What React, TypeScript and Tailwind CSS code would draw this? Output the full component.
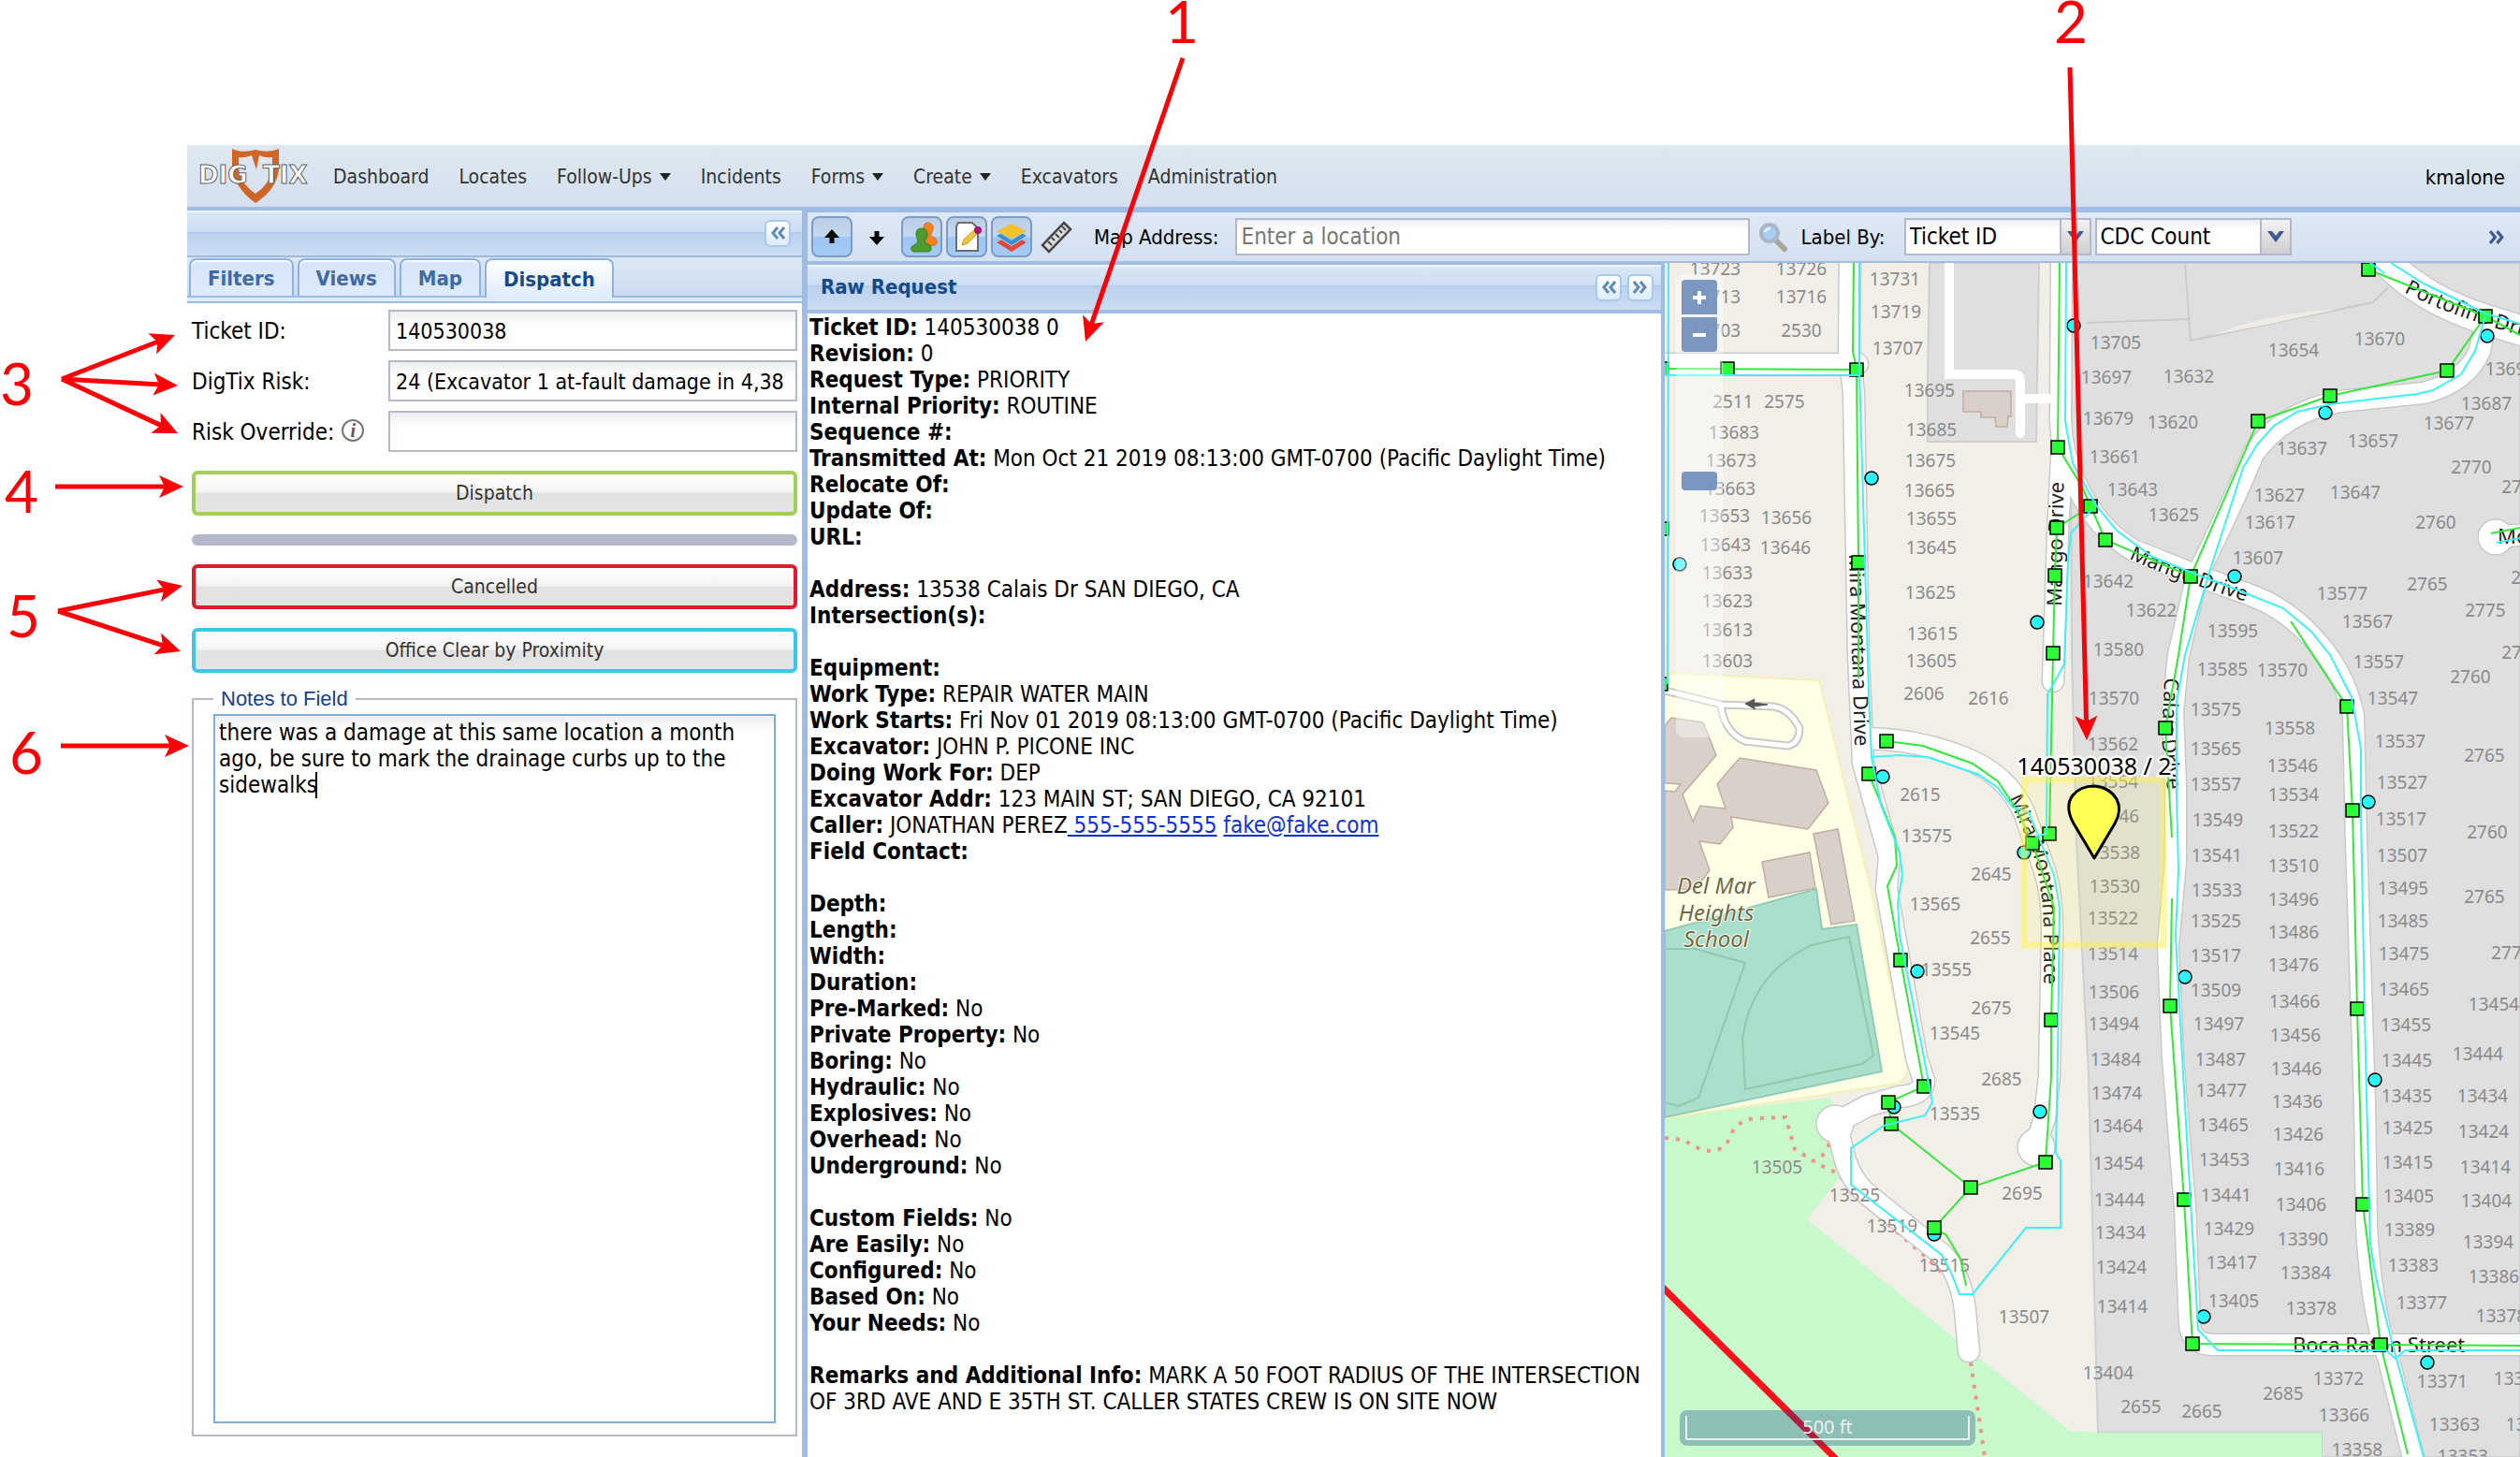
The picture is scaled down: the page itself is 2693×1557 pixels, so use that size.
import { Fragment, ReactNode } from "react";

type Point = [number, number];

const navItems = [
  { label: "Dashboard", menu: false },
  { label: "Locates", menu: false },
  { label: "Follow-Ups", menu: true },
  { label: "Incidents", menu: false },
  { label: "Forms", menu: true },
  { label: "Create", menu: true },
  { label: "Excavators", menu: false },
  { label: "Administration", menu: false },
];

const tabs = ["Filters", "Views", "Map", "Dispatch"];

// null is a blank line between the groups
const ticket: ([string, string] | null)[] = [
  ["Ticket ID:", "140530038 0"],
  ["Revision:", "0"],
  ["Request Type:", "PRIORITY"],
  ["Internal Priority:", "ROUTINE"],
  ["Sequence #:", ""],
  ["Transmitted At:", "Mon Oct 21 2019 08:13:00 GMT-0700 (Pacific Daylight Time)"],
  ["Relocate Of:", ""],
  ["Update Of:", ""],
  ["URL:", ""],
  null,
  ["Address:", "13538 Calais Dr SAN DIEGO, CA"],
  ["Intersection(s):", ""],
  null,
  ["Equipment:", ""],
  ["Work Type:", "REPAIR WATER MAIN"],
  ["Work Starts:", "Fri Nov 01 2019 08:13:00 GMT-0700 (Pacific Daylight Time)"],
  ["Excavator:", "JOHN P. PICONE INC"],
  ["Doing Work For:", "DEP"],
  ["Excavator Addr:", "123 MAIN ST; SAN DIEGO, CA 92101"],
  ["Caller:", "JONATHAN PEREZ"],
  ["Field Contact:", ""],
  null,
  ["Depth:", ""],
  ["Length:", ""],
  ["Width:", ""],
  ["Duration:", ""],
  ["Pre-Marked:", "No"],
  ["Private Property:", "No"],
  ["Boring:", "No"],
  ["Hydraulic:", "No"],
  ["Explosives:", "No"],
  ["Overhead:", "No"],
  ["Underground:", "No"],
  null,
  ["Custom Fields:", "No"],
  ["Are Easily:", "No"],
  ["Configured:", "No"],
  ["Based On:", "No"],
  ["Your Needs:", "No"],
  null,
  [
    "Remarks and Additional Info:",
    "MARK A 50 FOOT RADIUS OF THE INTERSECTION OF 3RD AVE AND E 35TH ST. CALLER STATES CREW IS ON SITE NOW",
  ],
];

const houses: [string, number, number][] = [
  ["13723", 1833, 287], ["13726", 1925, 287], ["13713", 1833, 317], ["13716", 1925, 317],
  ["13703", 1833, 353], ["2530", 1925, 353], ["13731", 2025, 298], ["13719", 2026, 333],
  ["13707", 2028, 372], ["13695", 2062, 417], ["2511", 1852, 429], ["2575", 1907, 429],
  ["13683", 1853, 462], ["13685", 2064, 459], ["13673", 1850, 492], ["13675", 2063, 492],
  ["13663", 1849, 522], ["13665", 2062, 524], ["13653", 1843, 551], ["13656", 1909, 553],
  ["13655", 2064, 554], ["13643", 1844, 582], ["13646", 1908, 585], ["13645", 2064, 585],
  ["13633", 1846, 612], ["13623", 1846, 642], ["13625", 2063, 633], ["13613", 1846, 673],
  ["13615", 2065, 677], ["13603", 1846, 706], ["13605", 2064, 706],
  ["13705", 2261, 366], ["13654", 2451, 374], ["13670", 2543, 362], ["13697", 2251, 403],
  ["13632", 2339, 402], ["13693", 2683, 394], ["13687", 2657, 431], ["13679", 2253, 447],
  ["13620", 2322, 451], ["13677", 2617, 452], ["13637", 2460, 479], ["13657", 2536, 471],
  ["13661", 2260, 488], ["2770", 2641, 499], ["2770", 2695, 520], ["13643", 2279, 523],
  ["13625", 2323, 550], ["13627", 2436, 529], ["13647", 2517, 526], ["13617", 2426, 558],
  ["2760", 2603, 558], ["13607", 2413, 596], ["13642", 2253, 621], ["13577", 2503, 634],
  ["2765", 2594, 624], ["2765", 2705, 617], ["13622", 2299, 652], ["13595", 2386, 674],
  ["13567", 2530, 664], ["2775", 2656, 652], ["13580", 2264, 694], ["2770", 2695, 697],
  ["13585", 2375, 715], ["13570", 2439, 716], ["13557", 2542, 707], ["2760", 2640, 723],
  ["13570", 2259, 746], ["13575", 2368, 758], ["13547", 2557, 746], ["13558", 2447, 778],
  ["13562", 2258, 795], ["13565", 2368, 800], ["13537", 2565, 792], ["2765", 2655, 807],
  ["13546", 2450, 818], ["13557", 2368, 838], ["13527", 2567, 836], ["13554", 2258, 835],
  ["13534", 2451, 849], ["13546", 2259, 872], ["13549", 2370, 876], ["13517", 2566, 875],
  ["13522", 2451, 888], ["2760", 2658, 889], ["13538", 2260, 911], ["13541", 2369, 914],
  ["13507", 2567, 914], ["13510", 2451, 925], ["13530", 2260, 947], ["13533", 2369, 951],
  ["13495", 2568, 949], ["13496", 2451, 961], ["2765", 2655, 958], ["13522", 2258, 981],
  ["13525", 2368, 984], ["13485", 2568, 984], ["13486", 2451, 996], ["13514", 2258, 1019],
  ["13517", 2368, 1021], ["13475", 2569, 1019], ["13476", 2451, 1031], ["2770", 2684, 1018],
  ["13506", 2259, 1060], ["13509", 2368, 1058], ["13465", 2569, 1057], ["13466", 2452, 1070],
  ["13454", 2665, 1073], ["13494", 2259, 1094], ["13497", 2371, 1094], ["13455", 2571, 1095],
  ["13456", 2453, 1106], ["13484", 2261, 1132], ["13487", 2373, 1132], ["13446", 2454, 1142],
  ["13445", 2572, 1133], ["13444", 2648, 1126], ["13474", 2262, 1168], ["13477", 2374, 1165],
  ["13436", 2455, 1177], ["13435", 2572, 1171], ["13434", 2653, 1171], ["13464", 2263, 1203],
  ["13465", 2376, 1202], ["13426", 2456, 1212], ["13425", 2573, 1205], ["13424", 2654, 1209],
  ["13454", 2264, 1243], ["13453", 2377, 1239], ["13416", 2457, 1249], ["13415", 2573, 1242],
  ["13414", 2656, 1247], ["13444", 2265, 1282], ["13441", 2379, 1277], ["13406", 2459, 1287],
  ["13405", 2574, 1278], ["13404", 2657, 1283], ["13434", 2266, 1317], ["13429", 2382, 1313],
  ["13390", 2461, 1324], ["13389", 2575, 1314], ["13394", 2659, 1327], ["13424", 2267, 1354],
  ["13417", 2385, 1349], ["13384", 2464, 1360], ["13383", 2579, 1352], ["13386", 2665, 1364],
  ["13414", 2268, 1396], ["13405", 2387, 1390], ["13378", 2470, 1398], ["13377", 2588, 1392],
  ["13378", 2673, 1406], ["13404", 2253, 1467], ["13372", 2499, 1473], ["13371", 2610, 1476],
  ["13374", 2692, 1473], ["2685", 2440, 1489], ["2655", 2288, 1503], ["2665", 2353, 1508],
  ["13366", 2505, 1512], ["13363", 2623, 1522], ["13365", 2705, 1522], ["13358", 2519, 1549],
  ["13353", 2632, 1556],
  ["2606", 2056, 741], ["2616", 2125, 746], ["2615", 2052, 849], ["13575", 2059, 893],
  ["2645", 2128, 934], ["13565", 2068, 966], ["2655", 2127, 1002], ["13555", 2080, 1036],
  ["2675", 2128, 1077], ["13545", 2089, 1104], ["2685", 2139, 1153], ["13535", 2089, 1190],
  ["13505", 1899, 1247], ["13525", 1982, 1277], ["2695", 2161, 1275], ["13519", 2022, 1310],
  ["13515", 2078, 1352], ["13507", 2163, 1407],
];

const roads = [
  "M1770 389H1985",
  "M1977 270L1976 375L1981 420L1986 700L1991 815L2019 915L2016 950L2048 1130L2056 1155Q2056 1170 2030 1172L1995 1182L1962 1200L1972 1240Q1980 1265 2000 1280L2075 1340Q2095 1360 2100 1400L2104 1444",
  "M2203 270L2202 450Q2204 500 2232 541Q2250 570 2280 588L2345 614L2400 634Q2440 648 2468 678Q2505 715 2515 765L2518 900L2527 1180L2529 1310Q2534 1400 2552 1450L2582 1570",
  "M2203 490L2199 570L2194 728",
  "M2657 340L2650 375Q2636 408 2590 420L2500 429Q2440 440 2408 485Q2385 540 2348 615L2328 700L2322 760L2325 840L2325 920L2317 1010L2322 1130L2335 1290L2340 1415Q2342 1437 2365 1437H2710",
  "M1995 789Q2050 790 2100 810Q2145 828 2163 868L2185 930Q2194 960 2193 1000L2190 1150L2185 1195L2175 1225",
  "M2667 574L2710 570",
];

const lotRoads = ["M2083 270V400H2152Q2159 400 2159 408V463", "M2159 426H2195"];

const gasLines: Point[][] = [
  [[1779, 394], [1984, 395]],
  [[1981, 281], [1980, 375], [1984, 395], [1986, 601], [1986, 725]],
  [[2201, 281], [2199, 478], [2225, 520], [2234, 541], [2250, 577], [2341, 616], [2413, 450], [2490, 423], [2615, 396], [2656, 338], [2531, 288]],
  [[2656, 338], [2693, 358]],
  [[2234, 541], [2198, 564], [2196, 615], [2194, 698], [2190, 891]],
  [[2341, 616], [2328, 700], [2314, 778], [2321, 895]],
  [[2321, 960], [2319, 1075], [2334, 1282], [2343, 1436], [2544, 1437], [2693, 1438]],
  [[2448, 664], [2508, 755], [2514, 866], [2519, 1078], [2525, 1287], [2544, 1437], [2573, 1554]],
  [[2016, 792], [2055, 797], [2108, 816], [2135, 835], [2155, 865], [2172, 901], [2195, 970], [2192, 1090], [2192, 1150], [2186, 1242], [2106, 1269], [2021, 1201], [2018, 1178], [2056, 1161], [2031, 1026], [2017, 947], [2027, 925], [2025, 895], [1997, 827]],
  [[2106, 1269], [2067, 1312], [2080, 1320], [2095, 1345], [2101, 1374]],
  [[2662, 570], [2693, 564]],
];

const waterLines: Point[][] = [
  [[1783, 281], [1782, 731]],
  [[1779, 401], [1987, 401]],
  [[1987, 281], [1987, 395], [1997, 740], [2000, 809], [2010, 860], [2030, 911], [2033, 935], [2028, 965], [2030, 1000], [2055, 1125], [2065, 1178], [2057, 1192], [2013, 1203], [1978, 1227], [1978, 1266], [2075, 1341], [2085, 1360], [2094, 1383], [2108, 1383], [2165, 1312], [2202, 1312], [2202, 1240], [2197, 1232], [2199, 1130], [2201, 970], [2195, 935], [2168, 868], [2151, 863], [2135, 842], [2115, 828], [2060, 809], [2030, 807], [2000, 809]],
  [[2208, 281], [2207, 450], [2215, 495], [2240, 540], [2262, 567], [2300, 595], [2345, 613], [2390, 630], [2440, 650], [2470, 675], [2490, 700], [2513, 745], [2523, 800], [2523, 870], [2528, 1130], [2533, 1330], [2540, 1370], [2556, 1434], [2561, 1452], [2590, 1557]],
  [[2656, 338], [2645, 375], [2630, 400], [2600, 417], [2583, 421], [2490, 432], [2455, 440], [2430, 455], [2412, 475], [2397, 500], [2360, 615], [2335, 700], [2326, 750], [2326, 850], [2328, 930], [2325, 1000], [2332, 1130], [2349, 1421], [2370, 1443], [2550, 1443], [2560, 1452], [2570, 1443], [2693, 1443]],
  [[2555, 281], [2590, 303], [2656, 335], [2693, 346]],
  [[2235, 545], [2213, 570], [2210, 600], [2206, 710], [2188, 742], [2187, 891], [2175, 894]],
  [[2668, 580], [2693, 575]],
  [[2533, 281], [2548, 292]],
];

const valves: Point[] = [
  [1776, 394], [1846, 394], [1984, 395], [2199, 478], [2198, 564], [2196, 615], [1986, 601],
  [1776, 565], [1775, 731], [2194, 698], [2531, 288], [2656, 338], [2615, 396], [2490, 423],
  [2413, 450], [2234, 541], [2250, 577], [2341, 616], [2016, 792], [1997, 827], [2190, 891],
  [2172, 901], [2031, 1026], [2192, 1090], [2314, 778], [2508, 755], [2514, 866], [2319, 1075],
  [2519, 1078], [2056, 1161], [2018, 1178], [2021, 1201], [2186, 1242], [2106, 1269],
  [2067, 1312], [2334, 1282], [2525, 1287], [2343, 1436], [2544, 1437],
];

const hydrants: Point[] = [
  [2000, 511], [1795, 603], [2216, 348], [2177, 665], [2658, 359], [2485, 441], [2388, 616],
  [2012, 830], [2049, 1038], [2163, 911], [2531, 857], [2335, 1044], [2538, 1154], [2180, 1188],
  [2024, 1183], [2067, 1319], [2355, 1407], [2594, 1456],
];

const callouts: [string, number, number][] = [
  ["1", 1263, 46],
  ["2", 2213, 46],
  ["3", 18, 433],
  ["4", 23, 548],
  ["5", 25, 681],
  ["6", 28, 827],
];

const arrows: [Point, Point][] = [
  [[1264, 62], [1160, 365]],
  [[2212, 72], [2230, 791]],
  [[66, 405], [187, 358]],
  [[66, 405], [190, 412]],
  [[66, 405], [190, 463]],
  [[59, 520], [196, 520]],
  [[62, 653], [195, 626]],
  [[62, 653], [193, 696]],
  [[65, 797], [202, 797]],
];

const line = (pts: Point[]) => pts.map((p) => p.join(",")).join(" ");

const Chevrons = ({ left = false, size = 16 }: { left?: boolean; size?: number }) => (
  <svg width={size} height={size} viewBox="0 0 16 16" fill="none" stroke="currentColor" strokeWidth="3">
    {left ? <path d="M8 2L3 8L8 14M15 2L10 8L15 14" /> : <path d="M1 2L6 8L1 14M8 2L13 8L8 14" />}
  </svg>
);

const ToolButton = ({ label, left = false }: { label: string; left?: boolean }) => (
  <button
    aria-label={label}
    className="flex h-[29px] w-7 items-center justify-center rounded-md border-2 border-[#a9c8ee] bg-gradient-to-b from-white to-[#dcebfa] text-[#5d8ab8]"
  >
    <Chevrons left={left} />
  </button>
);

const IconButton = ({ label, active, children }: { label: string; active?: boolean; children: ReactNode }) => (
  <button
    aria-label={label}
    className={`flex size-11 shrink-0 items-center justify-center rounded-lg border-2 ${
      active
        ? "border-[#7c9cc4] bg-[linear-gradient(#b9cfe6,#c4d8ed_50%,#9cc6f4_50%,#a3cbf5)]"
        : "border-transparent"
    }`}
  >
    <svg width="36" height="36" viewBox="0 0 36 36">
      {children}
    </svg>
  </button>
);

const Combo = ({ id, label, value, className }: { id: string; label: string; value: string; className: string }) => (
  <div className={`flex h-10 border-2 border-[#b5b8c8] bg-white ${className}`}>
    <select
      id={id}
      aria-label={label}
      defaultValue={value}
      className="w-0 flex-1 appearance-none bg-gradient-to-b from-[#eceeef] to-white to-30% pl-1 text-2xl leading-7 text-black outline-none"
    >
      <option>{value}</option>
    </select>
    <span className="pointer-events-none flex w-8 items-center justify-center border-l-2 border-[#b5b8c8] bg-gradient-to-b from-[#f2f2f2] to-[#cfcfcf]">
      <svg width="18" height="14" viewBox="0 0 18 14">
        <path d="M0 1H5L9 6L13 1H18L9 13Z" fill="#42598f" />
      </svg>
    </span>
  </div>
);

const Logo = () => (
  <svg width="122" height="62" viewBox="212 158 122 62" role="img" aria-label="DigTix">
    <path
      d="M248 160Q260 165 273 161Q286 165 298 160V182Q296 203 273 218Q252 203 248 182Z M255 169V182Q258 198 273 208Q288 198 291 182V169Q283 170 277 167L274 182L269 167Q262 170 255 169Z"
      fill="#cf6529"
      fillRule="evenodd"
    />
    <g
      fontFamily="DejaVu Sans, sans-serif"
      fontSize="26"
      fontWeight="bold"
      fill="#fff"
      stroke="#5f6468"
      strokeWidth="1"
    >
      <text x="212" y="197">DIG</text>
      <text x="281" y="197">TIX</text>
    </g>
  </svg>
);

const Header = () => (
  <header className="flex h-[66px] shrink-0 items-center bg-gradient-to-b from-[#dfe8f1] to-[#d4e0ee] px-3 text-[21px] text-[#333]">
    <Logo />
    <nav className="ml-[22px] flex gap-8 pt-0.5">
      {navItems.map((n) => (
        <button key={n.label} className="flex items-center gap-2 whitespace-nowrap">
          {n.label}
          {n.menu && (
            <svg width="12" height="8" viewBox="0 0 12 8">
              <path d="M0 0H12L6 8Z" fill="#222" />
            </svg>
          )}
        </button>
      ))}
    </nav>
    <span className="mt-1 mr-1 ml-auto text-[22px] text-black">kmalone</span>
  </header>
);

const Field = ({ id, label, value, info }: { id: string; label: string; value: string; info?: boolean }) => (
  <div className="flex items-center">
    <label htmlFor={id} className="flex w-[210px] items-center gap-2 pt-0.5 whitespace-nowrap">
      {label}
      {info && (
        <span className="-mt-1 flex size-6 items-center justify-center rounded-full border-2 border-[#777] font-['Liberation_Serif',serif] text-xl leading-none font-bold text-[#555] italic">
          i
        </span>
      )}
    </label>
    <input
      id={id}
      defaultValue={value}
      className="h-11 w-0 flex-1 border-2 border-[#b5b8c8] bg-gradient-to-b from-[#eceeef] to-white to-40% px-1.5 pt-0.5 text-[23px] outline-none"
    />
  </div>
);

const ActionButton = ({ children, className }: { children: string; className: string }) => (
  <button
    className={`h-12 w-full rounded-md border-4 bg-[linear-gradient(#fff,#f3f3f3_48%,#e2e2e2_50%,#e4e4e4)] text-[21px] text-[#333] ${className}`}
  >
    {children}
  </button>
);

const Sidebar = () => (
  <aside className="flex w-[657px] shrink-0 flex-col">
    <div className="flex h-[50px] items-center justify-end border-t-2 border-b-2 border-t-[#f0f6fc] border-b-[#9dbbdf] bg-[linear-gradient(#dae6f4,#cddef3_45%,#abc7ec_46%,#bdd2ee_50%,#cbdcf3)] pr-3 pb-0.5">
      <ToolButton label="Collapse sidebar" left />
    </div>
    <div className="border-b-2 border-[#9dbbdf] bg-[#deecfd] pb-1">
      <div className="flex h-[43px] items-end gap-1 border-b-2 border-[#99bbe8] bg-gradient-to-b from-[#dde8f4] to-[#cbdbef] px-0.5" role="tablist">
        {tabs.map((t) => (
          <button
            key={t}
            role="tab"
            aria-selected={t === "Dispatch"}
            className={`rounded-t-lg border-2 border-b-0 border-[#8db2e3] px-[18px] pt-0.5 text-[22px] font-bold shadow-[inset_0_2px_#fff] ${
              t === "Dispatch"
                ? "-mb-0.5 h-[42px] bg-gradient-to-b from-white to-[#deecfd] text-[#15498b]"
                : "h-10 bg-gradient-to-b from-[#d5e4f7] to-[#deecfd] text-[#416aa3]"
            }`}
          >
            {t}
          </button>
        ))}
      </div>
    </div>
    <form className="flex flex-1 flex-col px-[5px] pt-[7px] pb-[22px]">
      <div className="flex flex-col gap-2.5">
        <Field id="ticket" label="Ticket ID:" value="140530038" />
        <Field id="risk" label="DigTix Risk:" value="24 (Excavator 1 at-fault damage in 4,38" />
        <Field id="override" label="Risk Override:" value="" info />
      </div>
      <div className="mt-5 flex flex-col gap-5">
        <ActionButton className="border-[#a2cf5a]">Dispatch</ActionButton>
        <div className="h-3 rounded-full bg-[#b5b8c8]" />
        <ActionButton className="border-[#e01b2b]">Cancelled</ActionButton>
        <ActionButton className="border-[#3cc6ea]">Office Clear by Proximity</ActionButton>
      </div>
      <fieldset className="mt-4 flex flex-1 flex-col border-2 border-[#b5b8c8] px-[21px] pt-1 pb-3">
        <legend className="px-2 font-['Liberation_Sans',Arial,sans-serif] text-[22px] leading-6 text-[#15428b]">
          <label htmlFor="notes">Notes to Field</label>
        </legend>
        <div className="relative flex h-full flex-1">
          <textarea
            id="notes"
            defaultValue="there was a damage at this same location a month ago, be sure to mark the drainage curbs up to the sidewalks"
            className="h-full w-full resize-none border-2 border-[#7eadd9] bg-[linear-gradient(#eceeef,#fff_18px)] px-1 py-1 outline-none"
          />
          <span className="absolute top-[62px] left-[109px] h-7 w-0.5 bg-black" />
        </div>
      </fieldset>
    </form>
  </aside>
);

const MapToolbar = () => (
  <div className="flex h-14 shrink-0 items-center border-t-2 border-b-2 border-[#9dbde4] bg-gradient-to-b from-[#dfe8f5] to-[#d3e1f1] pl-1 text-[22px]">
    <div className="flex gap-1">
      <IconButton label="Previous ticket" active>
        <path d="M18 10L26 19H20.5V25H15.500V19H10Z" />
      </IconButton>
      <IconButton label="Next ticket">
        <path d="M18 27L26 18H20.500V12H15.500V18H10Z" />
      </IconButton>
      <IconButton label="Locators" active>
        <path d="M20 8Q20 3 25 3Q31 4 30 10Q29 14 27 16Q29 18 33 20Q36 25 32 27Q24 29 20 24Z" fill="#f58220" stroke="#d9691a" />
        <path d="M12 15Q12 9 18 9Q24 9 24 16Q24 19 21 22Q21 25 27 27Q30 33 25 34H9Q5 32 8 28Q14 26 14 22Q12 18 12 15Z" fill="#4d9c2d" stroke="#357a1c" />
      </IconButton>
      <IconButton label="Notes" active>
        <path d="M9 3H24L30 9V33H7V7Z" fill="#fdfdfd" stroke="#6d6d6d" strokeWidth="2" />
        <path d="M13 27L15 21L26 11L29 15L19 25Z" fill="#f2c43c" stroke="#c99a1a" />
        <circle cx="30" cy="11" r="4" fill="#b0116b" />
      </IconButton>
      <IconButton label="Layers" active>
        <path d="M2 24L18 15L34 24L18 34Z" fill="#e04a3f" />
        <path d="M2 18L18 9L34 18L18 28Z" fill="#bcd8f4" />
        <path d="M2 17L18 8L34 17L18 27Z" fill="#3b8fd0" />
        <path d="M2 12L18 5L34 12L18 22Z" fill="#9cc6f4" />
        <path d="M2 12L18 4L34 12L18 20Z" fill="#f2c12e" />
      </IconButton>
      <IconButton label="Measure">
        <path d="M3 27L26 3L33 10L10 34Z" fill="#dcdcdc" stroke="#444" strokeWidth="2.500" />
        <path d="M9 23L13 27M13 19L16 22M17 15L21 19M21 11L24 14M24 7L28 11" stroke="#444" strokeWidth="2" />
      </IconButton>
    </div>
    <label htmlFor="address" className="mx-[18px] pt-0.5 whitespace-nowrap">
      Map Address:
    </label>
    <input
      id="address"
      placeholder="Enter a location"
      className="h-10 w-0 max-w-[550px] flex-1 border-2 border-[#b5b8c8] bg-gradient-to-b from-[#eceeef] to-white to-30% px-1 text-2xl leading-7 outline-none placeholder:text-[#777]"
    />
    <button aria-label="Search" className="ml-2">
      <svg width="34" height="34" viewBox="0 0 34 34">
        <path d="M19 20L29 30" stroke="#a8a79c" strokeWidth="6" strokeLinecap="round" />
        <circle cx="13" cy="13" r="9" fill="#a9cdf3" stroke="#a9b6c4" strokeWidth="4" />
        <path d="M8 12Q9 8 14 8" stroke="#e4f1fd" strokeWidth="3" fill="none" />
      </svg>
    </button>
    <label htmlFor="label-by" className="mr-5 ml-3 pt-0.5 whitespace-nowrap">
      Label By:
    </label>
    <Combo id="label-by" label="Label By" value="Ticket ID" className="w-[200px]" />
    <Combo id="label-count" label="Second label" value="CDC Count" className="ml-1 w-[210px]" />
    <button aria-label="More tools" className="mr-4 ml-auto text-[#42598f]">
      <Chevrons size={17} />
    </button>
  </div>
);

const RawRequest = () => (
  <section className="flex min-w-0 flex-col overflow-hidden">
    <div className="flex h-[54px] shrink-0 items-center border-t-2 border-b-4 border-[#9dbde4] bg-[linear-gradient(#f0f6fc_2px,#dae6f4_2px,#cddef3_45%,#abc7ec_46%,#bdd2ee_50%,#cbdcf3)] pr-2 pl-3.5">
      <h2 className="flex-1 text-[22px] font-bold text-[#15498b]">Raw Request</h2>
      <div className="flex gap-1.5">
        <ToolButton label="Collapse left" left />
        <ToolButton label="Collapse right" />
      </div>
    </div>
    <div className="flex-1 pt-px pl-0.5">
      {ticket.map((row, i) =>
        row ? (
          <p key={i}>
            <b>{row[0]}</b> {row[1]}
            {row[0] === "Caller:" && (
              <>
                <a href="tel:5555555555" className="whitespace-pre text-[#1030d8] underline">
                  {" 555-555-5555"}
                </a>{" "}
                <a href="mailto:fake@fake.com" className="text-[#1030d8] underline">
                  fake@fake.com
                </a>
              </>
            )}
          </p>
        ) : (
          <br key={i} />
        )
      )}
    </div>
  </section>
);

const MapCanvas = () => (
  <svg className="absolute inset-0 size-full" viewBox="1779 281 914 1276" preserveAspectRatio="xMinYMin slice">
    <rect x="1779" y="281" width="914" height="1276" fill="#f2efe9" />

    {/* land use */}
    <path d="M2212 281L2214 700L2219 900L2232 1150L2242 1531H2481V1557H2693V281Z" fill="#dfdfdf" stroke="#cfcfcf" strokeWidth="2" />
    <path d="M2062 281H2179L2176 472H2060V400Z" fill="#dfdfdf" stroke="#cfcfcf" strokeWidth="2" />
    <path d="M1779 1193L1957 1173L1975 1240L1963 1262L1931 1303L2212 1529L2241 1531H2481V1557H1779Z" fill="#c8f9cc" />
    <path d="M1779 719L1944 727L2000 953L2037 1130Q2042 1150 2028 1158L1779 1195Z" fill="#ffffe5" stroke="#f5f0b4" strokeWidth="2" />
    <path d="M1779 995L1941 950L1947 993L1984 988L2011 1145L1779 1194Z" fill="#aadfcb" stroke="#8fcbb5" strokeWidth="2" />
    <path d="M1779 1014H1812L1865 1029L1815 1173L1794 1182L1779 1178M1976 1001L1936 1010Q1872 1040 1862 1110L1865 1164L1990 1137L2002 1128Z" fill="none" stroke="#8ccab2" strokeWidth="2" />
    <path d="M2335 281L2341 364L2536 323L2552 307M2230 345L2339 341" fill="none" stroke="#cbcbcb" strokeWidth="2" />
    <path d="M2365 358Q2420 335 2495 331Q2430 346 2365 358Z" fill="#eeece4" />

    {/* buildings */}
    <g fill="#d9d0c9" stroke="#c2ada3" strokeWidth="1.500">
      <path d="M1779 776L1786 767L1820 772L1834 807L1798 849L1809 878L1817 861L1844 864L1835 838L1859 810L1941 823L1954 858L1932 886L1850 873L1852 884L1838 902L1816 899L1827 930L1812 950L1779 951V845L1790 846L1796 838L1779 837Z" />
      <path d="M1938 891L1964 886L1982 984L1957 988Z" />
      <path d="M1883 921L1934 911L1940 949L1890 959Z" />
      <path d="M2098 418H2149V445H2146L2145 456H2133L2132 446H2117V440H2098Z" />
    </g>

    {/* trails */}
    <g fill="none" stroke="#f2908a" strokeWidth="4" strokeDasharray="4 8">
      <path d="M1779 1216L1800 1218Q1815 1230 1830 1230Q1845 1228 1850 1212Q1858 1195 1880 1195L1908 1194L1918 1228L1945 1245L1964 1254L1985 1280L2060 1345L2080 1365" />
      <path d="M1955 1222L1943 1243M2106 1456L2121 1557" />
    </g>

    {/* streets: casing first, then the white fill */}
    <g fill="none" stroke="#c9c9c9" strokeWidth="25" strokeLinecap="round">
      {roads.map((d) => (
        <path key={d} d={d} />
      ))}
      <path d="M2535 262Q2575 315 2655 341L2710 358" strokeWidth="34" />
      <path d="M1779 738L1840 753L1895 755Q1912 757 1923 778Q1923 795 1910 797L1865 792Q1842 782 1839 753" strokeWidth="9" />
    </g>
    <g fill="#fff" stroke="#c9c9c9" strokeWidth="1.500">
      <circle cx="1961" cy="1201" r="20" />
      <circle cx="2176" cy="1226" r="20" />
      <circle cx="2667" cy="574" r="19" />
    </g>
    <g fill="none" stroke="#fff" strokeWidth="22" strokeLinecap="round">
      {roads.map((d) => (
        <path key={d} d={d} />
      ))}
      {lotRoads.map((d) => (
        <path key={d} d={d} strokeWidth="10" />
      ))}
      <path d="M2535 262Q2575 315 2655 341L2710 358" strokeWidth="31" />
      <path d="M1779 738L1840 753L1895 755Q1912 757 1923 778Q1923 795 1910 797L1865 792Q1842 782 1839 753" strokeWidth="5" />
    </g>
    <path d="M1865 752L1875 747L1874 751L1889 753L1874 755L1876 758Z" fill="#555" stroke="#555" />

    <g fontFamily="Noto Sans, sans-serif" fontSize="19" fill="#8b8b8b" textAnchor="middle">
      {houses.map(([n, x, y], i) => (
        <text key={i} x={x} y={y + 7}>
          {n}
        </text>
      ))}
    </g>

    <g fontFamily="Noto Sans, sans-serif" fontSize="24" fontStyle="italic" fill="#6e6a3c" stroke="#fff" strokeWidth="2" paintOrder="stroke" textAnchor="middle">
      <text x="1834" y="955">Del Mar</text>
      <text x="1834" y="984">Heights</text>
      <text x="1834" y="1012">School</text>
    </g>

    {/* street names */}
    <defs>
      <path id="mira-drive" d="M1976 592L1979 700L1984 850" />
      <path id="mango-n" d="M2203 648L2206 490" />
      <path id="mango-e" d="M2275 597Q2330 623 2450 658" />
      <path id="portofino" d="M2569 312Q2620 340 2740 371" />
      <path id="calais" d="M2313 724L2310 790L2320 880" />
      <path id="mira-place" d="M2146 853L2170 905Q2184 945 2184 1000L2184 1080" />
    </defs>
    <g fontFamily="Noto Sans, sans-serif" fontSize="22" fill="#222" stroke="#fff" strokeWidth="2" paintOrder="stroke">
      <text><textPath href="#mira-drive">Mira Montana Drive</textPath></text>
      <text><textPath href="#mango-n">Mango Drive</textPath></text>
      <text><textPath href="#mango-e">Mango Drive</textPath></text>
      <text><textPath href="#portofino">Portofino Drive</textPath></text>
      <text><textPath href="#calais">Calais Drive</textPath></text>
      <text><textPath href="#mira-place">Mira Montana Place</textPath></text>
      <text x="2450" y="1445">Boca Raton Street</text>
      <text x="2669" y="581">Mo</text>
    </g>

    {/* utilities */}
    <g fill="none" stroke="#33e838" strokeWidth="2">
      {gasLines.map((pts, i) => (
        <polyline key={i} points={line(pts)} />
      ))}
    </g>
    <g fill="#2cff36" stroke="#000" strokeWidth="1.500">
      {hydrants.map(([x, y]) => (
        <circle key={`${x}-${y}`} cx={x} cy={y} r="7" fill="#2bf7fb" />
      ))}
      {valves.map(([x, y]) => (
        <rect key={`${x}-${y}`} x={x - 7} y={y - 7} width="14" height="14" />
      ))}
    </g>
    <g fill="none" stroke="#3df2f5" strokeWidth="2">
      {waterLines.map((pts, i) => (
        <polyline key={i} points={line(pts)} />
      ))}
    </g>

    {/* selected ticket */}
    <rect x="2163" y="833" width="149" height="177" fill="#ffff00" fillOpacity="0.08" stroke="#fff44f" strokeOpacity="0.5" strokeWidth="7" />
    <path d="M2238 917L2216 880Q2206 862 2215 850Q2223 840 2238 840Q2254 841 2262 854Q2268 866 2260 880Z" fill="#ffff54" stroke="#000" strokeWidth="3" strokeLinejoin="round" />
    <text x="2238" y="828" textAnchor="middle" fontFamily="Noto Sans, sans-serif" fontSize="25" stroke="#fff" strokeWidth="5" paintOrder="stroke" strokeLinejoin="round">
      140530038 / 2
    </text>
    <path d="M1776 1375L1970 1567" stroke="#f8131c" strokeWidth="7" />
  </svg>
);

const MapPanel = () => (
  <section className="relative overflow-hidden border-l-4 border-[#9dbde4]">
    <MapCanvas />
    <div className="absolute top-3 left-3 h-[495px] w-[50px] rounded-lg bg-white/40 px-1.5 py-1.5">
      <div className="flex flex-col gap-[3px] text-white">
        <button aria-label="Zoom in" className="flex h-[37px] items-center justify-center rounded-t bg-[#6f8eba]/90">
          <svg width="16" height="16" viewBox="0 0 16 16" stroke="currentColor" strokeWidth="4">
            <path d="M8 1V15M1 8H15" />
          </svg>
        </button>
        <button aria-label="Zoom out" className="flex h-[37px] items-center justify-center rounded-b bg-[#6f8eba]/90">
          <svg width="16" height="16" viewBox="0 0 16 16" stroke="currentColor" strokeWidth="4">
            <path d="M1 8H15" />
          </svg>
        </button>
      </div>
      <div className="mt-32 h-5 rounded bg-[#6f8eba]/90" />
    </div>
    <div className="absolute bottom-3 left-4 h-[38px] w-[316px] rounded-lg bg-[#003c88]/30 p-1.5">
      <div className="h-[26px] border-2 border-t-0 border-[#eee] text-center font-['Noto_Sans',sans-serif] text-xl leading-6 text-[#eee]">
        500 ft
      </div>
    </div>
  </section>
);

const Callouts = () => (
  <svg className="pointer-events-none absolute inset-x-0 top-0 w-full" viewBox="0 0 2693 1557">
    <g stroke="#fb0007" fill="#fb0007">
      {arrows.map(([[x1, y1], [x2, y2]], i) => {
        const angle = Math.atan2(y2 - y1, x2 - x1);
        return (
          <Fragment key={i}>
            <line x1={x1} y1={y1} x2={x2 - 18 * Math.cos(angle)} y2={y2 - 18 * Math.sin(angle)} strokeWidth="5" />
            <path
              d="M0 0L-26 -12L-20 0L-26 12Z"
              stroke="none"
              transform={`translate(${x2} ${y2}) rotate(${(angle * 180) / Math.PI})`}
            />
          </Fragment>
        );
      })}
    </g>
    <g fontFamily="Lato, sans-serif" fontSize="62" fill="#fb0007" textAnchor="middle">
      {callouts.map(([n, x, y]) => (
        <text key={n} x={x} y={y}>
          {n}
        </text>
      ))}
    </g>
  </svg>
);

const App = () => (
  <div className="relative flex h-screen flex-col overflow-hidden bg-white pt-[155px] pl-[200px] font-['DejaVu_Sans_Condensed','Noto_Sans',sans-serif] text-2xl leading-7 text-black">
    <Header />
    <div className="flex min-h-0 flex-1 border-t-4 border-[#9dbde4]">
      <Sidebar />
      <div className="w-1.5 shrink-0 bg-[#9dbde4]" />
      <main className="flex min-w-0 flex-1 flex-col">
        <MapToolbar />
        <div className="grid min-h-0 flex-1 grid-cols-[912fr_918fr]">
          <RawRequest />
          <MapPanel />
        </div>
      </main>
    </div>
    <Callouts />
  </div>
);

export default App;
